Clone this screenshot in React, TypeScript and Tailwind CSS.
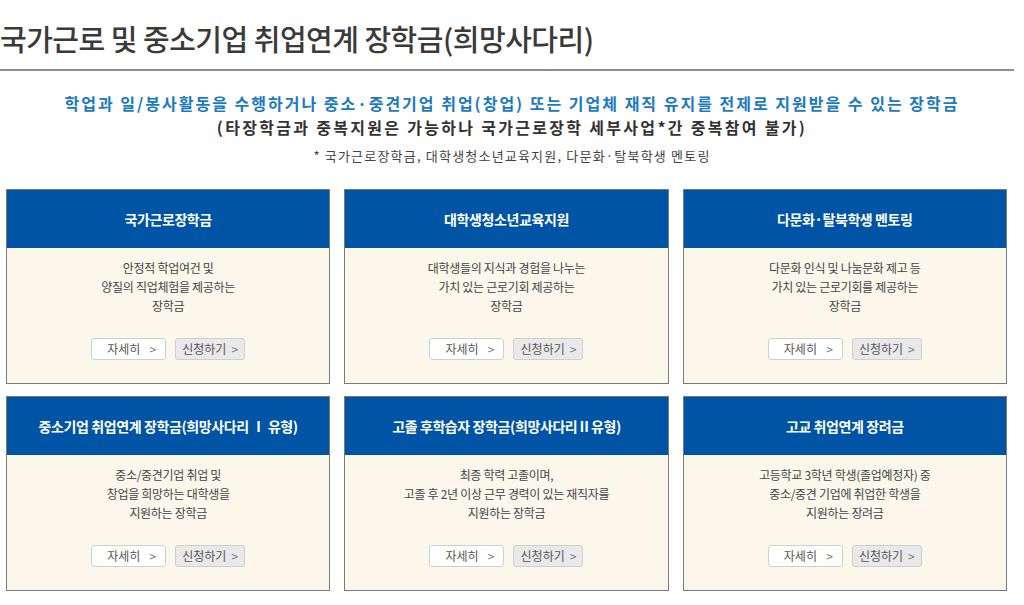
const font = { fontFamily: '"Malgun Gothic", "Noto Sans CJK KR", "Noto Sans", sans-serif' };

const cards = [
    {
        title: "국가근로장학금",
        desc: ["안정적 학업여건 및", "양질의 직업체험을 제공하는", "장학금"],
    },
    {
        title: "대학생청소년교육지원",
        desc: ["대학생들의 지식과 경험을 나누는", "가치 있는 근로기회 제공하는", "장학금"],
    },
    {
        title: "다문화·탈북학생 멘토링",
        desc: ["다문화 인식 및 나눔문화 제고 등", "가치 있는 근로기회를 제공하는", "장학금"],
    },
    {
        title: "중소기업 취업연계 장학금(희망사다리 Ⅰ 유형)",
        desc: ["중소/중견기업 취업 및", "창업을 희망하는 대학생을", "지원하는 장학금"],
    },
    {
        title: "고졸 후학습자 장학금(희망사다리Ⅱ유형)",
        desc: ["최종 학력 고졸이며,", "고졸 후 2년 이상 근무 경력이 있는 재직자를", "지원하는 장학금"],
    },
    {
        title: "고교 취업연계 장려금",
        desc: ["고등학교 3학년 학생(졸업예정자) 중", "중소/중견 기업에 취업한 학생을", "지원하는 장려금"],
    },
];

const Card = ({ title, desc }: { title: string; desc: string[] }) => (
    <div className="border border-[#7a7a7a] flex flex-col h-[195px]">
        <div className="h-[58px] bg-[#0054a6] flex items-center justify-center text-white text-[14px] font-bold tracking-[-0.4px]">
            {title}
        </div>
        <div className="flex-1 bg-[#fbf8eb] flex flex-col items-center pt-[10px]">
            <div className="text-center text-[12px] leading-[19px] text-[#444] tracking-[-0.3px]">
                {desc.map((d, i) => (
                    <p key={i}>{d}</p>
                ))}
            </div>
            <div className="flex gap-[9px] mt-[23px]">
                <button className="w-[75px] h-[22px] bg-white border border-[#cfcfcf] rounded-[3px] flex items-center justify-between pl-[15px] pr-[9px] text-[12px] text-[#555]">
                    <span>자세히</span>
                    <span className="text-[#777]">&gt;</span>
                </button>
                <button className="w-[70px] h-[22px] bg-[#e9e9e9] border border-[#cfcfcf] rounded-[3px] flex items-center justify-center gap-[5px] text-[12px] text-[#555]">
                    <span>신청하기</span>
                    <span className="text-[#777]">&gt;</span>
                </button>
            </div>
        </div>
    </div>
);

export default function App() {
    return (
        <div className="w-[1024px] h-[605px] bg-white overflow-hidden" style={font}>
            <div className="w-[1014px] border-b-2 border-[#8d8da6] h-[71px] flex items-end pb-[16px]">
                <h2 className="text-[29px] leading-none text-[#3a3a3a] tracking-[-0.5px] font-medium">
                    국가근로 및 중소기업 취업연계 장학금(희망사다리)
                </h2>
            </div>

            <div className="text-center pt-[21px]">
                <p className="text-[16px] font-bold text-[#1a7ac4] leading-[22px] tracking-[2px]">
                    학업과 일/봉사활동을 수행하거나 중소·중견기업 취업(창업) 또는 기업체 재직 유지를 전제로 지원받을 수 있는 장학금
                </p>
                <p className="text-[16px] font-bold text-[#333] leading-[22px] tracking-[2.3px] mt-[2px]">
                    (타장학금과 중복지원은 가능하나 국가근로장학 세부사업*간 중복참여 불가)
                </p>
                <p className="text-[13px] text-[#444] leading-[18px] tracking-[1.2px] mt-[9px]">
                    * 국가근로장학금, 대학생청소년교육지원, 다문화·탈북학생 멘토링
                </p>
            </div>

            <div className="ml-[6px] w-[1001px] grid grid-cols-3 gap-x-[14px] gap-y-[12px] mt-[24px]">
                {cards.map((c, i) => (
                    <Card key={i} title={c.title} desc={c.desc} />
                ))}
            </div>
        </div>
    );
}
